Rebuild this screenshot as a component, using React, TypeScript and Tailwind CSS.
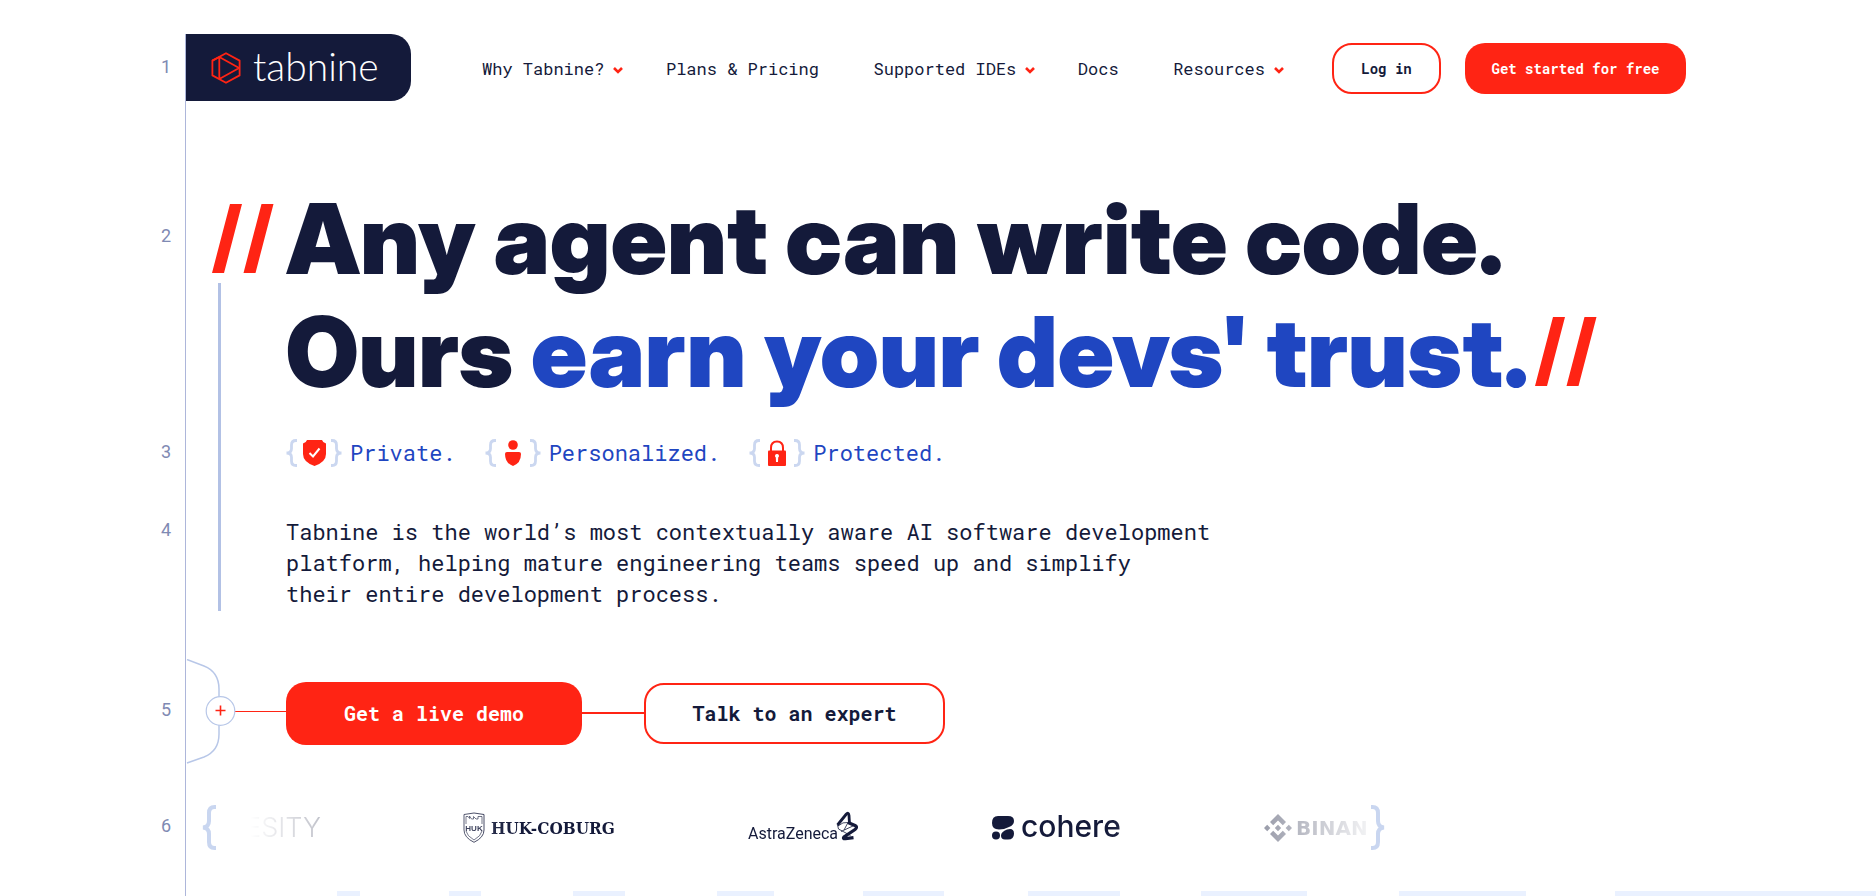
import type { ReactNode } from 'react';

interface NavItem {
  label: string;
  hasMenu: boolean;
}

const navItems: NavItem[] = [
  { label: 'Why Tabnine?', hasMenu: true },
  { label: 'Plans & Pricing', hasMenu: false },
  { label: 'Supported IDEs', hasMenu: true },
  { label: 'Docs', hasMenu: false },
  { label: 'Resources', hasMenu: true },
];

const stripes = [
  'ml-[151px] w-[23px]',
  'ml-[89px] w-[32px]',
  'ml-[92px] w-[52px]',
  'ml-[92px] w-[57px]',
  'ml-[89px] w-[81px]',
  'ml-[84px] w-[92px]',
  'ml-[81px] w-[106px]',
  'ml-[92px] w-[127px]',
  'ml-[89px] flex-1',
];

function Chevron() {
  return (
    <svg viewBox="0 0 10 7" className="mt-1 h-[7px] w-[10px]" fill="none" stroke="#ff2414" strokeWidth="2.6" aria-hidden="true">
      <path d="M1 1l4 4 4-4" />
    </svg>
  );
}

function Slashes() {
  return (
    <svg viewBox="0 0 62 69" className="h-[69px] w-[62px] shrink-0" fill="#ff2414" aria-hidden="true">
      <path d="M0 69L18 0h12L12 69zM31.500 69L49.500 0h12L43.500 69z" />
    </svg>
  );
}

function Brace({ flip = false }: { flip?: boolean }) {
  return (
    <svg viewBox="0 0 15 45" className="h-[45px] w-[15px] shrink-0" fill="none" stroke="#c9d6f0" strokeWidth="4" aria-hidden="true">
      {flip ? (
        <path d="M0 2h1.500Q7 2 7 8v8q0 6 6 6.500-6 .5-6 6.500v8q0 6-5.500 6H0" />
      ) : (
        <path d="M15 2h-1.500Q8 2 8 8v8q0 6-6 6.500 6 .5 6 6.500v8q0 6 5.500 6H15" />
      )}
    </svg>
  );
}

function SmallBrace({ flip = false }: { flip?: boolean }) {
  return (
    <svg viewBox="0 0 11 28" className="h-7 w-[11px] shrink-0" fill="none" stroke="#cbd7f0" strokeWidth="2.8" aria-hidden="true">
      {flip ? (
        <path d="M0 1.500h1Q5.500 1.500 5.500 6v3.500Q5.500 14 10.500 14 5.500 14 5.500 18.500V22q0 4.500-4.500 4.500H0" />
      ) : (
        <path d="M11 1.500h-1Q5.500 1.500 5.500 6v3.500Q5.500 14 .5 14 5.500 14 5.500 18.500V22q0 4.500 4.500 4.500h1" />
      )}
    </svg>
  );
}

function Feature({ label, children }: { label: string; children: ReactNode }) {
  return (
    <li className="flex items-center">
      <SmallBrace />
      <span className="flex w-[34px] justify-center">{children}</span>
      <SmallBrace flip />
      <span className="ml-[8px]">{label}</span>
    </li>
  );
}

function LineNumber({ value, className }: { value: number; className: string }) {
  return (
    <div className={`pr-[14px] text-right font-['Roboto'] text-[18px] leading-[22px] text-[#7f8ab3] ${className}`}>
      {value}
    </div>
  );
}

function TabnineLogo() {
  return (
    <a href="#" className="flex h-[67px] w-[225px] shrink-0 items-center rounded-r-[20px] bg-[#141a3a] pl-[25px] text-white">
      <svg viewBox="0 0 30 32" className="h-8 w-[30px]" fill="none" stroke="#ff2414" strokeWidth="1.8" strokeLinejoin="round" aria-hidden="true">
        <path d="M15 1.200L28.600 8.600v14.800L15 30.800 1.400 23.400V8.600z" />
        <path d="M8.300 5v22M8.300 5l20.300 11.300M8.300 27l20.300-11.300M1.400 8.600l6.900-3.600" />
      </svg>
      <span className="ml-[12px] pb-1 font-['Lato'] text-[39px] font-light leading-[40px]">tabnine</span>
    </a>
  );
}

function Header() {
  return (
    <header className="col-span-2 flex border-l border-[#adb6da] pb-[79px] pr-[190px]">
      <TabnineLogo />
      <div className="flex h-[69px] flex-1 items-center pl-[71px]">
        <nav className="flex flex-1 items-center justify-between text-[17px] leading-[22px]">
          {navItems.map((item) => (
            <a key={item.label} href="#" className={`flex items-center gap-[9px] whitespace-nowrap ${item.hasMenu ? '' : 'pr-3'}`}>
              {item.label}
              {item.hasMenu && <Chevron />}
            </a>
          ))}
        </nav>
        <button className="ml-[48px] h-[51px] w-[109px] rounded-[20px] border-2 border-[#ff2414] text-[14px] font-bold">
          Log in
        </button>
        <button className="ml-6 h-[51px] w-[221px] rounded-[20px] bg-[#ff2414] text-[14px] font-bold text-white">
          Get started for free
        </button>
      </div>
    </header>
  );
}

function CustomerLogos() {
  return (
    <div className="flex h-[45px] w-[1155px] items-center overflow-hidden whitespace-nowrap text-[#141a3a] [mask-image:linear-gradient(to_right,transparent_3%,black_26%,black_77%,transparent_101%)]">
      <span className="w-[105px] shrink-0 text-right font-['Inter'] text-[27px] font-light leading-[30px]">ESITY</span>

      <span className="ml-[142px] flex w-[154px] shrink-0 items-center gap-[6px]">
        <svg viewBox="0 0 22 31" className="h-[31px] w-[22px] shrink-0" fill="none" stroke="currentColor" aria-hidden="true">
          <path d="M1 2.500Q11-.5 21 2.500V18q0 7.500-10 12.300Q1 25.500 1 18z" strokeWidth=".9" />
          <path d="M3 12V4.500h2l1.500 2V4l2 3h2V4.500L13 7h2V4.500h4V12M3 19q1 5 8 9 7-4 8-9" strokeWidth=".7" />
          <text x="11" y="18.500" textAnchor="middle" fontFamily="Liberation Sans" fontSize="8" fontWeight="bold" fill="currentColor" stroke="none">
            HUK
          </text>
        </svg>
        <span className="font-['DejaVu_Serif_Condensed','DejaVu_Serif'] text-[17px] font-bold leading-[22px]">HUK-COBURG</span>
      </span>

      <span className="ml-[131px] flex w-[110px] shrink-0 items-end">
        <span className="w-[88px] font-['Roboto'] text-[16px] leading-[22px]">AstraZeneca</span>
        <svg viewBox="0 0 22 30" className="mb-1 h-[30px] w-[22px] shrink-0" fill="none" stroke="currentColor" aria-hidden="true">
          <path d="M1.500 14L10 3.500q2.500-3 3 1L13.500 13" strokeWidth="2.8" />
          <path d="M12 11.500l7 3q3 1.500 0 4L8 26q-1.500 2 1.500 1.700l8-1" strokeWidth="3.2" />
          <path d="M1.500 14l1 4 12 6.500M2 15q5-4.500 10-3.500L8 19M5 20.500l13-6" strokeWidth=".8" />
        </svg>
      </span>

      <span className="ml-[134px] flex w-[131px] shrink-0 items-center gap-[7px]">
        <svg viewBox="0 0 22 24" className="h-6 w-[22px] shrink-0" fill="currentColor" aria-hidden="true">
          <path d="M6 0h10q6 0 6 5 0 4-5 6-5 2.500-10 2.500-7 0-7-6.500 0-7 6-7z" />
          <circle cx="4" cy="19.500" r="4" />
          <path d="M15 13.500q7-2 7 4 0 6-6 6h-3q-4 0-4-4 0-3.500 6-6z" />
        </svg>
        <span className="pb-1 font-['Inter'] text-[30px] font-medium leading-[32px]">cohere</span>
      </span>

      <span className="ml-[141px] flex shrink-0 items-center gap-[4px]">
        <svg viewBox="0 0 28 28" className="h-7 w-7 shrink-0" fill="currentColor" aria-hidden="true">
          <path d="M14 0l8 8-3.200 3.200L14 6.400 9.200 11.200 6 8zM14 28l8-8-3.200-3.200L14 21.600 9.200 16.800 6 20z" />
          <path d="M14 10.800l3.200 3.200-3.200 3.200-3.200-3.200zM3.200 10.800L6.400 14l-3.200 3.200L0 14zM24.800 10.800L28 14l-3.200 3.200-3.200-3.200z" />
        </svg>
        <span className="font-['DejaVu_Sans'] text-[20px] font-bold leading-[24px]">BINAN</span>
      </span>
    </div>
  );
}

export default function App() {
  return (
    <div className="grid min-h-screen grid-cols-[185px_101px_1fr] overflow-hidden bg-white pt-[34px] font-['Roboto_Mono','Liberation_Mono',monospace] text-[#141a3a]">
      {/* 1: header */}
      <LineNumber value={1} className="pt-[22px]" />
      <Header />

      {/* 2: headline */}
      <LineNumber value={2} className="pt-[43px]" />
      <div className="row-span-3 flex flex-col border-l border-[#adb6da] pl-[26px] pt-[22px]">
        <Slashes />
        <div className="ml-[6px] mt-[10px] w-[3px] flex-1 bg-[#b2c1e5]" />
      </div>
      <h1 className="whitespace-nowrap font-['Inter_Display','Inter'] text-[97px] font-black leading-[113px]">
        Any agent can write code.
        <span className="flex items-center">
          <span>
            Ours <span className="text-[#1f46c1]">earn your devs' trust.</span>
          </span>
          <span className="ml-[6px]">
            <Slashes />
          </span>
        </span>
      </h1>

      {/* 3: features */}
      <LineNumber value={3} className="pt-[33px]" />
      <ul className="flex gap-[29px] pt-[29px] text-[22px] leading-[31px] text-[#1f46c1]">
        <Feature label="Private.">
          <svg viewBox="0 0 23 26" className="h-[26px] w-[23px]" aria-hidden="true">
            <path d="M4 0h15q1 3 4 3.500V14q0 8-11.500 12Q0 22 0 14V3.500Q3 3 4 0z" fill="#ff2414" />
            <path d="M6.500 13l3.500 3.500 6.500-8" fill="none" stroke="#fff" strokeWidth="2" />
          </svg>
        </Feature>
        <Feature label="Personalized.">
          <svg viewBox="0 0 16 26" className="h-[26px] w-4" fill="#ff2414" aria-hidden="true">
            <circle cx="8" cy="5" r="4.800" />
            <path d="M2 12h12q2 0 2 2 0 9-8 12-8-3-8-12 0-2 2-2z" />
          </svg>
        </Feature>
        <Feature label="Protected.">
          <svg viewBox="0 0 18 26" className="h-[26px] w-[18px]" aria-hidden="true">
            <path d="M3 12V8q0-6.500 6-6.500T15 8v4" fill="none" stroke="#ff2414" strokeWidth="2" />
            <rect y="10.500" width="18" height="15.500" rx="1" fill="#ff2414" />
            <path d="M9 14a2 2 0 0 1 1.200 3.600L10 22H8l-.2-4.400A2 2 0 0 1 9 14z" fill="#fff" />
          </svg>
        </Feature>
      </ul>

      {/* 4: pitch */}
      <LineNumber value={4} className="pt-[51px]" />
      <p className="pb-[2px] pt-[48px] text-[22px] leading-[31px]">
        Tabnine is the world’s most contextually aware AI software development
        <br />
        platform, helping mature engineering teams speed up and simplify
        <br />
        their entire development process.
      </p>

      {/* 5: calls to action */}
      <LineNumber value={5} className="pt-[88px]" />
      <div className="border-l border-[#adb6da] pt-[48px]">
        <svg viewBox="0 0 100 105" className="h-[105px] w-[100px]" fill="none" aria-hidden="true">
          <path d="M1 .5l17 6.500Q33 13 33 30v45q0 17-15 23L1 104" stroke="#b8c7e8" strokeWidth="1.500" />
          <path d="M48 52.500h52" stroke="#ff2414" />
          <circle cx="34.500" cy="52" r="14.300" fill="#fff" stroke="#b8c7e8" strokeWidth="1.200" />
          <path d="M34.500 46.500v10M29.500 51.500h10" stroke="#ff2414" strokeWidth="1.600" />
        </svg>
      </div>
      <div className="flex items-center pt-[51px]">
        <button className="h-[63px] w-[296px] rounded-[20px] bg-[#ff2414] text-[20px] font-bold text-white">
          Get a live demo
        </button>
        <div className="h-[2px] w-[62px] bg-[#ff2414]" />
        <button className="h-[61px] w-[301px] rounded-[20px] border-2 border-[#ff2414] text-[20px] font-bold">
          Talk to an expert
        </button>
      </div>

      {/* 6: customers */}
      <LineNumber value={6} className="pt-[51px]" />
      <div className="col-span-2 flex border-l border-[#adb6da] pb-[41px] pl-[15px] pt-[41px]">
        <Brace />
        <CustomerLogos />
        <Brace flip />
      </div>

      <div className="col-span-2 col-start-2 flex h-[5px] border-l border-[#adb6da]">
        {stripes.map((stripe) => (
          <div key={stripe} className={`h-[5px] bg-[#eaf1ff] ${stripe}`} />
        ))}
      </div>
    </div>
  );
}
